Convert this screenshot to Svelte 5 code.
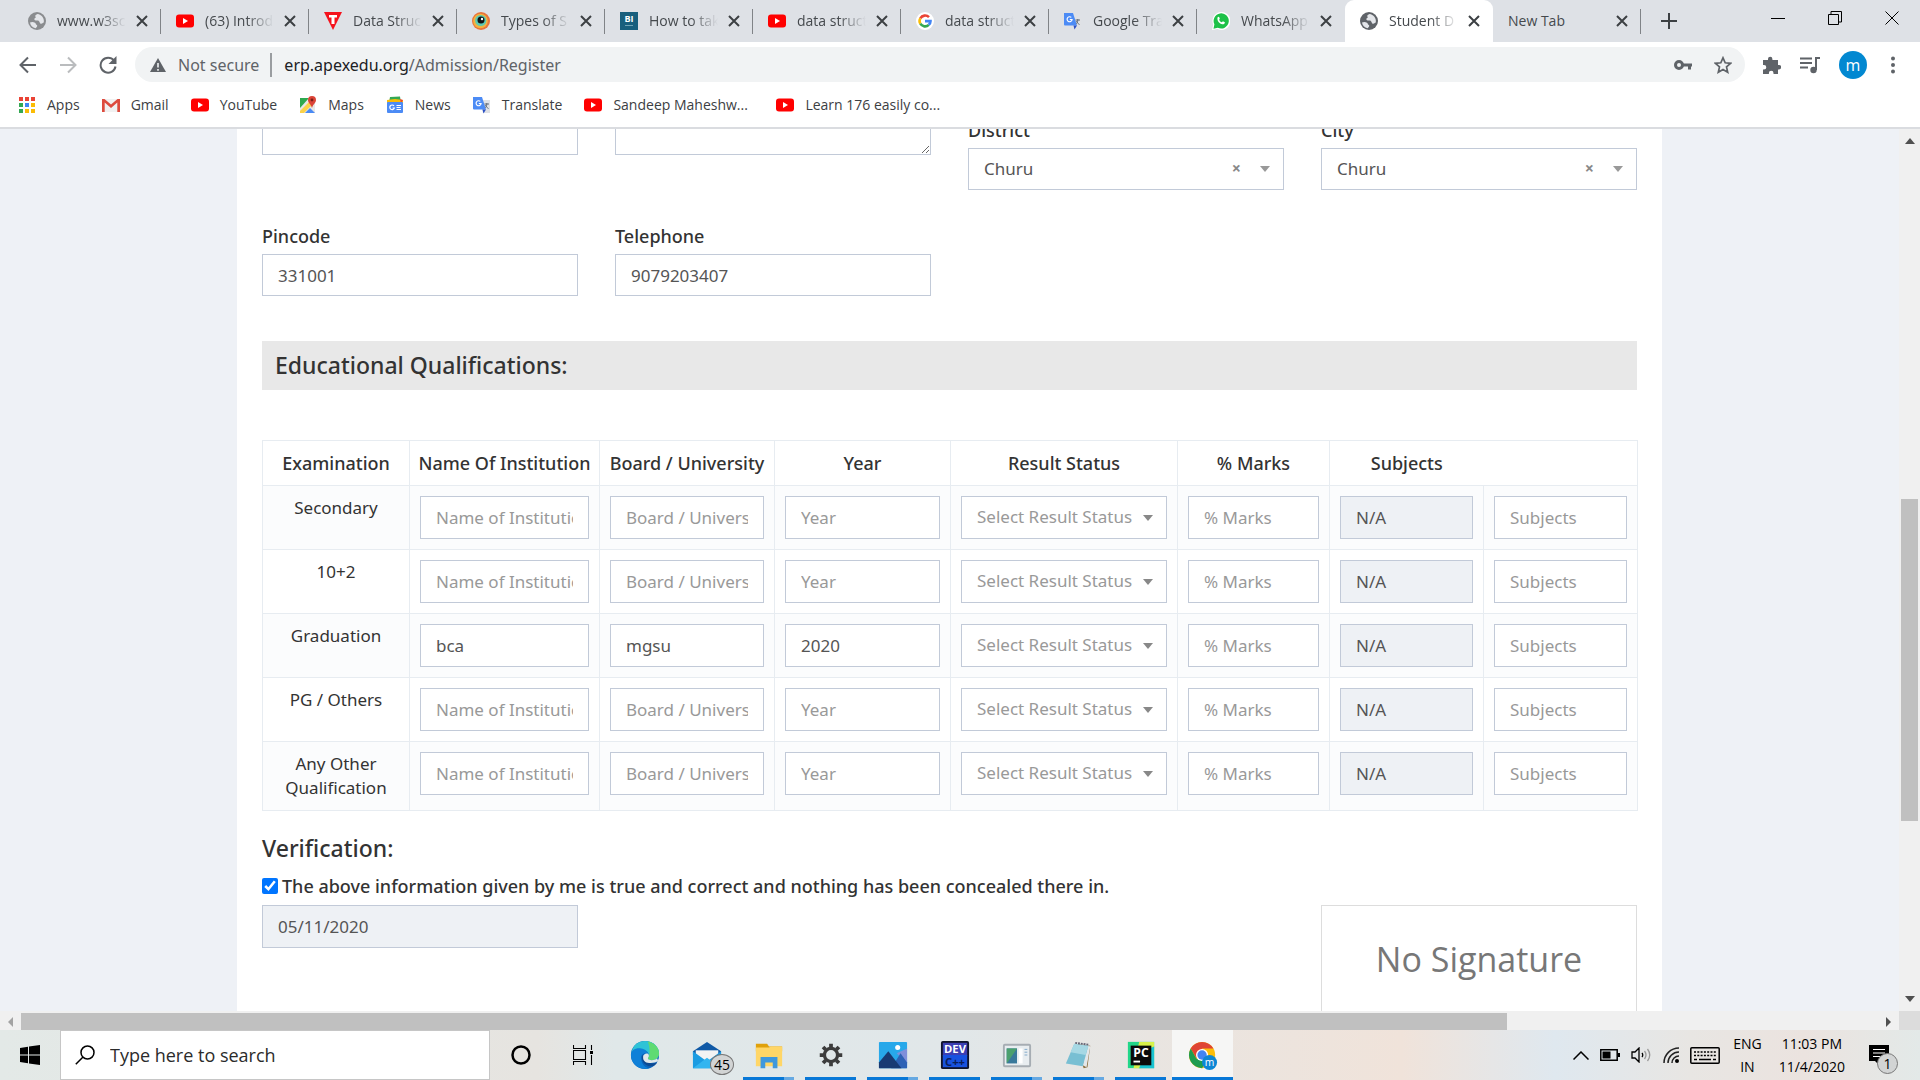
<script>
  const tabs = [
    { icon: 'globe', title: 'www.w3sc' },
    { icon: 'youtube', title: '(63) Introd' },
    { icon: 'tutor', title: 'Data Struc' },
    { icon: 'eye', title: 'Types of S' },
    { icon: 'bi', title: 'How to tak' },
    { icon: 'youtube', title: 'data struct' },
    { icon: 'google', title: 'data struct' },
    { icon: 'translate', title: 'Google Tra' },
    { icon: 'whatsapp', title: 'WhatsApp' },
    { icon: 'globe', title: 'Student D', active: true },
    { icon: '', title: 'New Tab' }
  ];
  const bookmarks = [
    { icon: 'apps', title: 'Apps' },
    { icon: 'gmail', title: 'Gmail' },
    { icon: 'youtube', title: 'YouTube' },
    { icon: 'maps', title: 'Maps' },
    { icon: 'news', title: 'News' },
    { icon: 'translate', title: 'Translate' },
    { icon: 'youtube', title: 'Sandeep Maheshw...', long: true },
    { icon: 'youtube', title: 'Learn 176 easily co...', long: true }
  ];
  const exams = [
    { name: 'Secondary', inst: '', board: '', year: '' },
    { name: '10+2', inst: '', board: '', year: '' },
    { name: 'Graduation', inst: 'bca', board: 'mgsu', year: '2020' },
    { name: 'PG / Others', inst: '', board: '', year: '' },
    { name: 'Any Other Qualification', inst: '', board: '', year: '' }
  ];
  const places = [
    { id: 'district', label: 'District' },
    { id: 'city', label: 'City' }
  ];
  const apps = [
    { icon: 'edge', label: 'Microsoft Edge' },
    { icon: 'mail', label: 'Mail', badge: '45' },
    { icon: 'folder', label: 'File Explorer', open: true, many: true },
    { icon: 'gear', label: 'Settings', open: true },
    { icon: 'photos', label: 'Photos', open: true, many: true },
    { icon: 'dev', label: 'Dev-C++', open: true },
    { icon: 'window', label: 'Program', open: true, many: true },
    { icon: 'notepad', label: 'Notepad', open: true, many: true },
    { icon: 'pycharm', label: 'PyCharm', open: true },
    { icon: 'chrome', label: 'Google Chrome', open: true, active: true }
  ];
</script>

{#snippet siteIcon(name)}
  <svg class="site-icon" viewBox="0 0 18 18" aria-hidden="true">
    {#if name === 'globe'}
      <circle cx="9" cy="9" r="9" fill="currentColor" />
      <path d="M2 10.500c1.500-.8 3.500-.8 5 .2 1 .6.600 1.800 1.800 2.300.8.500.4 1.500-.3 2.200l-.8 1C4.500 15.800 2.300 13.500 2 10.500zM9.500 2c-2.300 1-3 2-1.500 3.300-1.500.8-2.500 2-1 3 1.500.7 3-.3 4 .9 1 1 .5 2.300 2 2.500 1.500.1 1.500-1 2.800-1.200C16.500 6 13.500 2.500 9.500 2z" fill="#e4e6ea" />
    {:else if name === 'youtube'}
      <rect x="0" y="2.500" width="18" height="13" rx="3" fill="#f00" />
      <path d="M7 6v6l5-3z" fill="#fff" />
    {:else if name === 'tutor'}
      <path d="M0 0h18L9 18z" fill="#f5121c" />
      <path d="M5 3h8v2.500h-2.500V12h-3V5.500H5z" fill="#fff" />
    {:else if name === 'eye'}
      <circle cx="9" cy="9" r="9" fill="#e8743b" />
      <circle cx="8.500" cy="9" r="7.300" fill="#f4b23e" />
      <circle cx="8.700" cy="8.500" r="5.600" fill="#5cc9b4" />
      <circle cx="9" cy="8" r="3.500" fill="#111" />
      <circle cx="10" cy="7" r="1.200" fill="#fff" />
    {:else if name === 'bi'}
      <rect width="18" height="18" fill="#185f7d" />
      <text x="9" y="10" text-anchor="middle" font-size="9" font-weight="700" fill="#fff">BI</text>
      <path d="M5 13.500h8" stroke="#6fa3b5" />
    {:else if name === 'google'}
      <circle cx="9" cy="9" r="9" fill="#fff" />
      <g fill="none" stroke-width="2.600">
        <path d="M13 5.200A5.500 5.500 0 0 0 4.300 6.300" stroke="#ea4335" />
        <path d="M4.300 6.300a5.500 5.500 0 0 0 0 5.400" stroke="#fbbc05" />
        <path d="M4.300 11.700a5.500 5.500 0 0 0 8.500 1.200" stroke="#34a853" />
        <path d="M12.800 12.900A5.500 5.500 0 0 0 14.500 9.100H9" stroke="#4285f4" />
      </g>
    {:else if name === 'translate'}
      <path d="M7 4h10v13H10z" fill="#dfe1e5" />
      <path d="M0 1h9l4 12.500H1A1 1 0 0 1 0 12.500z" fill="#4c8bf5" />
      <path d="M9.500 13.500H13l-2.500 4z" fill="#2a4fc4" />
      <path d="M7.300 5.400a2.500 2.500 0 1 0 .8 2.100H5.800" fill="none" stroke="#fff" stroke-width="1.200" />
      <path d="M11.500 8H16M13.800 7v1c0 2-1 3.500-1.500 4M12.500 9c.5 1.500 2 3 3 3.500" fill="none" stroke="#616b78" />
    {:else if name === 'whatsapp'}
      <path d="M1.200 12.500A9 9 0 1 1 5.500 17L0 18z" fill="#fff" />
      <path d="M2.400 12.300a7.600 7.600 0 1 1 3.400 3.400L1.500 16.700z" fill="#1dc148" />
      <path d="M5.500 5.500c.8-1.200 1.500-.9 1.900 0l.4 1.200-.7 1c.8 1.500 1.500 2 2.800 2.600l1-1 2 1c-.1 1.500-1.200 2.200-2.500 2-3-.5-5.500-3.500-4.900-6.800z" fill="#fff" />
    {:else if name === 'apps'}
      {#each [0, 1, 2] as r}
        {#each [0, 1, 2] as c}
          <rect x={1 + c * 6} y={1 + r * 6} width="4" height="4" fill={['#ea4335', '#ea4335', '#ea4335', '#34a853', '#4285f4', '#fbbc05', '#34a853', '#fbbc05', '#fbbc05'][r * 3 + c]} />
        {/each}
      {/each}
    {:else if name === 'gmail'}
      <path d="M0 3h18v13H0z" fill="#f1f1f1" />
      <path d="M0 3h2.500L9 8.500 15.500 3H18v13h-2.700V6.600L9 12 2.700 6.600V16H0z" fill="#dd4b3e" />
    {:else if name === 'maps'}
      <path d="M1 2h15v15H1z" fill="#e8e8e6" />
      <path d="M1 2h9L1 12z" fill="#2da94f" />
      <path d="M1 15 13 3l3 3L5 17H1z" fill="#fbd249" />
      <path d="M6 17l5-5 5 5z" fill="#4a8af4" />
      <path d="M13 0a4 4 0 0 1 4 4c0 3-3 4-4 8-1-4-4-5-4-8a4 4 0 0 1 4-4z" fill="#db4437" />
      <circle cx="13" cy="4" r="1.400" fill="#7b1f18" />
    {:else if name === 'news'}
      <path d="M4 1l10-.5 1 6H3z" fill="#34a853" />
      <path d="M1 4l8-1 8 1v3H1z" fill="#fbbc05" />
      <path d="M14 3l3 1-2 3z" fill="#ea4335" />
      <rect x="1" y="6" width="16" height="11" rx="1" fill="#4c8bf5" />
      <path d="M8 10a2.300 2.300 0 1 0 .3 2H6.500M10.500 9.500h4.500M10.500 11.500h4M10.500 13.500h4.500" fill="none" stroke="#fff" stroke-width="1.200" />
    {/if}
  </svg>
{/snippet}

{#snippet appIcon(name)}
  <svg class="app-icon" viewBox="0 0 32 32" aria-hidden="true">
    {#if name === 'edge'}
      <circle cx="16" cy="16" r="15" fill="#0b63b8" />
      <path d="M1.500 14C3 5 9 1 16 1c9 0 15 6.500 15 13 0 5-4 7.500-8 7.500-3.500 0-4.500-1.500-3.500-3 1.500-2.500 0-7.500-6-7.500-6 0-10.500 1.500-12 3z" fill="#2fc3d6" />
      <path d="M19 1.500C27 3 31 9 31 14c0 5-4 7.500-8 7.500-3.500 0-4.500-1.500-3.500-3 2-3 2-10-.5-17z" fill="#5fdb72" />
      <path d="M1 16c0-5 5-8 11-7 4 .6 7 3 7 6-3-2-7 0-7 5 0 5 4 10 9 10C10 33 1 26 1 16z" fill="#0f80d8" />
      <path d="M13 15c-2 6 2 13 9 13 3 0 5-1 7-4-3 1.500-14 3-16-9z" fill="#0d4a93" />
      <path d="M19.500 15c1 1.500.8 2.700 0 3.500-1 1.500 0 3 3.500 3 3 0 5-1 6-2l1 3c-4 3-17 4-16-5 .3-2 3-4 5.500-2.500z" fill="#e1e8ea" />
    {:else if name === 'mail'}
      <path d="M1 12 16 2l15 10v4H1z" fill="#0f59a6" />
      <path d="M4 11h24v12H4z" fill="#f3f3f3" />
      <path d="M1 12l15 11 15-11v18H1z" fill="#1b9ce2" />
      <path d="M1 30l15-11 15 11z" fill="#32b5f0" />
    {:else if name === 'folder'}
      <path d="M2 4h12l2 3h14v5H2z" fill="#e0a10b" />
      <path d="M2 8h14l2-1h12v21H2z" fill="#ffd667" />
      <path d="M7 18h18v12h-5v-6h-8v6H7z" fill="#3f98dd" />
    {:else if name === 'gear'}
      <g stroke="#3c3c3c" stroke-width="4">
        {#each [0, 45, 90, 135] as a}
          <path d="M16 4v4M16 24v4" transform="rotate({a} 16 16)" />
        {/each}
      </g>
      <circle cx="16" cy="16" r="7" fill="none" stroke="#3c3c3c" stroke-width="3.500" />
    {:else if name === 'photos'}
      <rect x="1" y="2" width="30" height="28" rx="1" fill="#27a8ea" />
      <path d="M20 14l11 12V9z" fill="#7f8fda" />
      <path d="M14 30 24 14l7 10v6z" fill="#2d62b5" />
      <path d="M1 24 11 12l14 18H1z" fill="#183a72" />
      <circle cx="21" cy="8" r="2.700" fill="#fff" />
    {:else if name === 'dev'}
      <rect x="1" y="1" width="30" height="30" rx="2" fill="#10142c" />
      <rect x="3" y="3" width="26" height="14" fill="#3c3fb3" />
      <rect x="3" y="16" width="26" height="13" fill="#1852e0" />
      <text x="16" y="14" text-anchor="middle" font-size="12" font-weight="700" fill="#fff">DEV</text>
      <text x="16" y="28" text-anchor="middle" font-size="12" font-weight="700" fill="#0b1d57">C++</text>
    {:else if name === 'window'}
      <rect x="2" y="5" width="28" height="23" rx="1" fill="#e8edf0" stroke="#a6adb3" stroke-width="2" />
      <rect x="5" y="9" width="11" height="16" fill="#39799b" />
      <path d="M5 9h11L5 25z" fill="#4ba06e" />
      <path d="M18 9h4v16h-4z" fill="#fff" />
      <path d="M24 10h3M24 13h3M24 16h3" stroke="#7fa8c9" />
    {:else if name === 'notepad'}
      <path d="M12 4l16 2-3 23-4 1z" fill="#8a6c3c" />
      <path d="M24 5l4 2-4 22-4-2z" fill="#e3e7e9" />
      <path d="M11 4l15 2-6 22-18-3z" fill="#78bfd3" />
      <path d="M11 4l15 2-3 10-16-3z" fill="#a6d8e4" />
      <path d="M12 3l14 2" stroke="#667" stroke-width="2" stroke-dasharray="2 1" />
    {:else if name === 'pycharm'}
      <rect x="2" y="2" width="28" height="28" fill="#21d789" />
      <path d="M14 2h16v13L16 30H8z" fill="#d8f24a" />
      <path d="M22 10l8-3v23H14z" fill="#19c3d1" />
      <rect x="5" y="6" width="22" height="21" fill="#0b0b0b" />
      <text x="16" y="18" text-anchor="middle" font-size="13" font-weight="700" fill="#fff">PC</text>
      <path d="M8 23h7" stroke="#fff" stroke-width="2" />
    {:else if name === 'chrome'}
      <circle cx="15" cy="16" r="14" fill="#fbbd0a" />
      <path d="M2.900 9a14 14 0 0 1 24.200 0H15L9 19.500z" fill="#df4434" />
      <path d="M2.900 9a14 14 0 0 0 12.100 21l6-10.500-12 .5z" fill="#1e9c50" />
      <circle cx="15" cy="16" r="6.500" fill="#fff" />
      <circle cx="15" cy="16" r="5" fill="#4284f3" />
      <circle cx="23" cy="24" r="8" fill="#0c86d4" />
      <text x="23" y="28" text-anchor="middle" font-size="11" fill="#fff">m</text>
    {/if}
  </svg>
{/snippet}

<div class="screen">
  <header class="browser">
    <div class="strip">
      <nav class="tabs" aria-label="Tabs">
        {#each tabs as tab}
          <div class="tab" class:active={tab.active} class:plain={!tab.icon}>
            {#if tab.icon}{@render siteIcon(tab.icon)}{/if}
            <span class="tab-title">{tab.title}</span>
            <button class="tab-close" aria-label="Close tab">
              <svg width="12" height="12" viewBox="0 0 12 12"><path d="M1 1l10 10M11 1 1 11" stroke="#3c4043" stroke-width="2" /></svg>
            </button>
          </div>
        {/each}
      </nav>
      <button class="new-tab" aria-label="New tab">
        <svg width="16" height="16" viewBox="0 0 16 16"><path d="M8 0v16M0 8h16" stroke="#3c4043" stroke-width="2" /></svg>
      </button>
      <div class="window-buttons">
        <button aria-label="Minimize"><svg width="14" height="14" viewBox="0 0 14 14"><path d="M0 7.500h14" stroke="#000" /></svg></button>
        <button aria-label="Restore"><svg width="14" height="14" viewBox="0 0 14 14"><path d="M.5 3.500h10v10H.5zM3 3V.5h10.500V11H11" fill="none" stroke="#000" /></svg></button>
        <button aria-label="Close"><svg width="14" height="14" viewBox="0 0 14 14"><path d="M.5.5l13 13M13.500.5l-13 13" stroke="#000" /></svg></button>
      </div>
    </div>

    <div class="toolbar">
      <div class="nav-buttons">
        <button aria-label="Back"><svg width="18" height="18" viewBox="0 0 18 18"><path d="M17 9H2M9 1.500 1.500 9 9 16.500" fill="none" stroke="#5f6368" stroke-width="2" /></svg></button>
        <button aria-label="Forward"><svg width="18" height="18" viewBox="0 0 18 18"><path d="M1 9h15M9 1.500 16.500 9 9 16.500" fill="none" stroke="#babcbe" stroke-width="2" /></svg></button>
        <button aria-label="Reload"><svg width="18" height="18" viewBox="0 0 18 18"><path d="M15 4.500A7.500 7.500 0 1 0 16.500 10.500" fill="none" stroke="#5f6368" stroke-width="2" /><path d="M17.500 0v8h-8z" fill="#5f6368" /></svg></button>
      </div>
      <div class="omnibox">
        <svg width="16" height="16" viewBox="0 0 16 16"><path d="M8 1l8 14H0z" fill="#5f6368" /><path d="M8 6v4.500M8 12v1.800" stroke="#f1f3f4" stroke-width="1.600" /></svg>
        <span class="secure">Not secure</span>
        <a class="url" href="#register"><b>erp.apexedu.org</b>/Admission/Register</a>
        <button aria-label="Saved passwords"><svg width="18" height="18" viewBox="0 0 18 18"><circle cx="5" cy="9" r="3.500" fill="none" stroke="#5f6368" stroke-width="3" /><path d="M8 9h10M15.500 9v4.500" stroke="#5f6368" stroke-width="3" /></svg></button>
        <button aria-label="Bookmark this page"><svg width="18" height="18" viewBox="0 0 18 18"><path d="M9 1.800l2.200 5 5.400.5-4.100 3.600 1.200 5.300L9 13.400l-4.700 2.800 1.200-5.300-4.100-3.600 5.400-.5z" fill="none" stroke="#5f6368" stroke-width="1.700" /></svg></button>
      </div>
      <div class="tools">
        <button aria-label="Extensions"><svg width="18" height="18" viewBox="0 0 18 18"><path d="M0 4h5V3a2.200 2.200 0 0 1 4.400 0v1H15v5h1a2.200 2.200 0 0 1 0 4.400h-1V18h-4.500v-1a2.300 2.300 0 0 0-4.600 0v1H0v-4.500h1a2.300 2.300 0 0 0 0-4.600H0z" fill="#5f6368" /></svg></button>
        <button aria-label="Media"><svg width="20" height="18" viewBox="0 0 20 18"><path d="M0 2.500h12M0 7h12M0 11.500h8M16 14V2h4" fill="none" stroke="#5f6368" stroke-width="2" /><circle cx="13.500" cy="14" r="3.200" fill="#5f6368" /></svg></button>
        <button class="avatar" aria-label="Profile">m</button>
        <button aria-label="Menu"><svg width="6" height="18" viewBox="0 0 6 18"><g fill="#5f6368"><circle cx="3" cy="2.500" r="2" /><circle cx="3" cy="9" r="2" /><circle cx="3" cy="15.500" r="2" /></g></svg></button>
      </div>
    </div>

    <nav class="bookmarks" aria-label="Bookmarks">
      {#each bookmarks as mark}
        <a href="#bookmark" class:long={mark.long}>{@render siteIcon(mark.icon)}<span>{mark.title}</span></a>
      {/each}
    </nav>
  </header>

  <div class="viewport">
    <main>
      <form class="sheet">
        <div class="fields">
          <textarea class="control fixed" aria-label="Permanent address"></textarea>
          <textarea class="control" aria-label="Correspondence address"></textarea>
          {#each places as place}
            <div class="field">
              <label for={place.id}>{place.label}</label>
              <div class="picker">
                <select class="control" id={place.id}><option>Churu</option></select>
                <button type="button" class="clear" aria-label="Clear {place.label}">×</button>
                <svg class="caret" width="10" height="6" viewBox="0 0 10 6"><path d="M0 0h10L5 6z" fill="#999" /></svg>
              </div>
            </div>
          {/each}
          <div class="field">
            <label for="pincode">Pincode</label>
            <input class="control" id="pincode" value="331001" />
          </div>
          <div class="field">
            <label for="telephone">Telephone</label>
            <input class="control" id="telephone" value="9079203407" />
          </div>
        </div>

        <h2 class="band">Educational Qualifications:</h2>

        <table>
          <colgroup>
            <col class="w-exam" /><col class="w-inst" /><col class="w-board" /><col class="w-year" />
            <col class="w-status" /><col class="w-marks" /><col class="w-subject" /><col class="w-subject" />
          </colgroup>
          <thead>
            <tr>
              <th>Examination</th>
              <th>Name Of Institution</th>
              <th>Board / University</th>
              <th>Year</th>
              <th>Result Status</th>
              <th>% Marks</th>
              <th class="open-end">Subjects</th>
              <td class="open-start"></td>
            </tr>
          </thead>
          <tbody>
            {#each exams as exam}
              <tr>
                <td class="name">{exam.name}</td>
                <td><input class="control" placeholder="Name of Institution" aria-label="{exam.name} institution" value={exam.inst} /></td>
                <td><input class="control" placeholder="Board / University" aria-label="{exam.name} board" value={exam.board} /></td>
                <td><input class="control" placeholder="Year" aria-label="{exam.name} year" value={exam.year} /></td>
                <td>
                  <div class="picker">
                    <select class="control muted" aria-label="{exam.name} result status"><option>Select Result Status</option></select>
                    <svg class="caret" width="10" height="6" viewBox="0 0 10 6"><path d="M0 0h10L5 6z" fill="#888" /></svg>
                  </div>
                </td>
                <td><input class="control" placeholder="% Marks" aria-label="{exam.name} marks" /></td>
                <td><input class="control" value="N/A" readonly aria-label="{exam.name} grade" /></td>
                <td><input class="control" placeholder="Subjects" aria-label="{exam.name} subjects" /></td>
              </tr>
            {/each}
          </tbody>
        </table>

        <h2 class="verify">Verification:</h2>
        <div class="consent">
          <input type="checkbox" id="consent" checked />
          <label for="consent">The above information given by me is true and correct and nothing has been concealed there in.</label>
        </div>
        <div class="fields signing">
          <input class="control" value="05/11/2020" readonly aria-label="Date" />
          <div class="signature">No Signature</div>
        </div>
      </form>
    </main>
    <div class="vbar">
      <svg width="10" height="6" viewBox="0 0 10 6"><path d="M0 6h10L5 0z" fill="#505050" /></svg>
      <div class="vtrack"><div class="before"></div><div class="thumb"></div><div class="after"></div></div>
      <svg width="10" height="6" viewBox="0 0 10 6"><path d="M0 0h10L5 6z" fill="#505050" /></svg>
    </div>
    <div class="hbar">
      <svg width="21" height="10" viewBox="0 0 21 10"><path d="M13 0v10L8 5z" fill="#a3a3a3" /></svg>
      <div class="htrack"><div class="thumb"></div><div class="rest"></div></div>
      <svg width="21" height="10" viewBox="0 0 21 10"><path d="M8 0v10l5-5z" fill="#505050" /></svg>
    </div>
    <div class="corner"></div>
  </div>

  <footer class="taskbar">
    <button class="start" aria-label="Start">
      <svg width="20" height="20" viewBox="0 0 20 20"><path d="M0 3l8-1.200v7.700H0zM9 1.600 20 0v9.500H9zM0 10.500h8v7.700L0 17zM9 10.500h11V20L9 18.400z" /></svg>
    </button>
    <div class="search">
      <svg width="20" height="20" viewBox="0 0 20 20"><circle cx="12.500" cy="7.500" r="6.500" fill="none" stroke="#000" stroke-width="1.500" /><path d="M8 12 .8 19.200" stroke="#000" stroke-width="1.500" /></svg>
      <input placeholder="Type here to search" aria-label="Type here to search" />
    </div>
    <div class="apps">
      <button aria-label="Cortana"><svg width="20" height="20" viewBox="0 0 20 20"><circle cx="10" cy="10" r="8.500" fill="none" stroke="#000" stroke-width="2.500" /></svg></button>
      <button aria-label="Task view"><svg width="20" height="20" viewBox="0 0 20 20"><path d="M.5 0v3.500h12V0M.5 5.500h12v9H.5zM.5 20v-3.500h12V20M18.500 0v5M18.500 10v10" fill="none" stroke="#000" stroke-width="1.100" /><path d="M17 6h3v3h-3z" /></svg></button>
      {#each apps as app}
        <button aria-label={app.label} class:open={app.open} class:many={app.many} class:active={app.active}>
          {@render appIcon(app.icon)}
          {#if app.badge}<span class="badge count">{app.badge}</span>{/if}
        </button>
      {/each}
    </div>
    <div class="tray">
      <svg width="16" height="9" viewBox="0 0 16 9"><path d="M.5 8.500 8 1l7.500 7.500" fill="none" stroke="#000" stroke-width="1.500" /></svg>
      <svg width="20" height="12" viewBox="0 0 20 12"><path d="M.8.800h16.400v10.400H.8z" fill="none" stroke="#000" stroke-width="1.500" /><path d="M2.500 2.500h8v7h-8zM18 4h2v4h-2z" /></svg>
      <svg width="21" height="16" viewBox="0 0 21 16"><path d="M1 5h3l4-4v14l-4-4H1zM11 6q1.500 2 0 4" fill="none" stroke="#000" stroke-width="1.300" /><path d="M13.500 4q3 4 0 8M16.500 2q4.500 6 0 12" fill="none" stroke="#999" stroke-width="1.300" /></svg>
      <svg width="16" height="16" viewBox="0 0 16 16"><path d="M1 16A15 15 0 0 1 16 1M5 16A11 11 0 0 1 16 5M9 16a7 7 0 0 1 7-7" fill="none" stroke="#222" stroke-width="1.500" /><circle cx="14" cy="14" r="2" /></svg>
      <svg width="30" height="17" viewBox="0 0 30 17"><rect x=".8" y=".8" width="28.400" height="15.400" rx="1" fill="none" stroke="#000" stroke-width="1.500" /><path d="M4 5h22M4 8.500h22" stroke="#000" stroke-width="1.300" stroke-dasharray="2 1.300" /><path d="M4 12.500h3M9 12.500h12M23 12.500h3" stroke="#000" stroke-width="1.300" /></svg>
      <div class="lines lang"><span>ENG</span><span>IN</span></div>
      <div class="lines clock"><span>11:03 PM</span><span>11/4/2020</span></div>
      <button class="notice" aria-label="Notifications">
        <svg width="20" height="20" viewBox="0 0 20 20"><path d="M0 0h20v16H10v4l-4-4H0z" /><path d="M4 4.500h12M4 8h12M4 11.500h8" stroke="#fff" stroke-width="1.200" /></svg>
        <span class="badge">1</span>
      </button>
    </div>
  </footer>
</div>

<style>
  :global(body) { margin: 0; }
  .screen, .screen :global(*) { box-sizing: border-box; }
  .screen {
    display: flex;
    flex-direction: column;
    height: 100vh;
    overflow: hidden;
    font-family: "Open Sans", "Noto Sans", sans-serif;
    font-size: 17px;
    color: #333;
  }
  button {
    display: flex;
    align-items: center;
    justify-content: center;
    padding: 0;
    border: 0;
    background: none;
    font: inherit;
    color: inherit;
  }
  svg { flex: none; display: block; }
  a { color: inherit; text-decoration: none; }
  input, select, textarea { font: inherit; }

  .browser { flex: none; background: #fff; border-bottom: 2px solid #dadce0; font-size: 14px; }
  .site-icon { width: 18px; height: 18px; color: #8a8c8f; }

  .strip { display: flex; height: 42px; background: #dee1e6; }
  .tabs { flex: 1; min-width: 0; display: grid; grid-template-columns: repeat(11, minmax(0, 1fr)); padding-left: 13px; }
  .tab { display: flex; align-items: center; padding: 0 13px 1px 15px; position: relative; color: #45494d; }
  .tab::after { content: ""; position: absolute; right: 0; top: 9px; width: 1px; height: 25px; background: #808387; }
  .tab:has(+ .active)::after, .tab.active::after { display: none; }
  .tab.active { background: #fff; border-radius: 9px 9px 0 0; }
  .tab.active .site-icon { color: #5f6368; }
  .tab-title {
    flex: 1;
    min-width: 0;
    margin: 0 4px 0 11px;
    overflow: hidden;
    white-space: nowrap;
    mask-image: linear-gradient(to right, #000 55%, transparent 92%);
  }
  .plain .tab-title { margin-left: 0; mask-image: none; }
  .new-tab { width: 56px; }
  .window-buttons { display: flex; justify-content: flex-end; width: 223px; }
  .window-buttons button { width: 57px; height: 36px; }

  .toolbar { display: flex; align-items: center; height: 45px; padding: 0 24px 0 19px; }
  .nav-buttons { display: flex; gap: 22px; width: 116px; }
  .omnibox { flex: 1; display: flex; align-items: center; height: 35px; padding: 0 13px 0 15px; border-radius: 18px; background: #f1f3f4; font-family: "Noto Sans", sans-serif; font-size: 16px; color: #5f6368; }
  .secure { margin-left: 12px; padding-right: 11px; border-right: 2px solid #9a9da0; line-height: 24px; }
  .url { flex: 1; margin-left: 12px; }
  .url b { font-weight: 400; color: #202124; }
  .omnibox button { margin-left: 22px; }
  .tools { display: flex; align-items: center; gap: 19px; margin-left: 18px; }
  .avatar { width: 28px; height: 28px; margin-right: 4px; border-radius: 50%; background: #0288d1; color: #fff; font-size: 16px; line-height: 24px; }

  .bookmarks { display: flex; align-items: center; gap: 22px; height: 40px; padding: 0 18px 5px; color: #3c4043; }
  .bookmarks a { display: flex; align-items: center; gap: 11px; white-space: nowrap; }
  .bookmarks a.long { width: 170px; }

  .viewport { flex: 1; min-height: 0; display: grid; grid-template: minmax(0, 1fr) 19px / minmax(0, 1fr) 21px; font-family: "Noto Sans", sans-serif; }
  main { overflow: hidden; background: #eef1f6; }
  .sheet { display: flow-root; margin: 0 237px; padding: 0 25px; background: #fff; min-height: 100%; }
  .fields { display: grid; grid-template-columns: repeat(4, minmax(0, 1fr)); gap: 34px 37px; align-items: start; }
  .fields:first-child { margin-top: -11px; }
  label, th { font-size: 18px; font-weight: 500; color: #333; }
  .field label { display: block; height: 24px; margin-bottom: 6px; line-height: 24px; }
  .control {
    display: block;
    width: 100%;
    height: 42px;
    padding: 0 15px;
    border: 1px solid #c2cad8;
    border-radius: 0;
    background: #fff;
    color: #555;
    appearance: none;
  }
  .control::placeholder { color: #999; opacity: 1; }
  .control:read-only:not(select) { background: #eef1f5; }
  textarea.control { height: 37px; background: #fff; }
  .fixed { resize: none; }
  .picker { position: relative; }
  .picker .control { padding-bottom: 1px; }
  .muted { color: #999; }
  .caret { position: absolute; right: 14px; top: 50%; margin-top: -3px; }
  .clear { position: absolute; right: 43px; top: 10px; height: 20px; color: #888; font-size: 16px; font-weight: 700; }

  h2 { font-size: 23px; font-weight: 500; margin: 0; }
  .band { margin: 45px 0 50px; padding: 0 13px; background: #e8e8e8; line-height: 49px; }

  table { width: 100%; table-layout: fixed; border-collapse: collapse; border: 1px solid #e7ecf1; }
  .w-exam { width: 147px; } .w-inst { width: 190px; } .w-board { width: 175px; } .w-year { width: 176px; }
  .w-status { width: 227px; } .w-marks { width: 152px; } .w-subject { width: 154px; }
  th, td { padding: 10px; border: 1px solid #e7ecf1; line-height: 24px; text-align: center; vertical-align: top; }
  th { padding: 10px 0; white-space: nowrap; }
  .open-end { border-right: 0; }
  .open-start { border-left: 0; }
  tbody tr:nth-child(odd) { background: #fbfcfd; }
  td .control { height: 43px; }

  .verify { margin-top: 20px; line-height: 34px; }
  .consent { display: flex; align-items: center; gap: 4px; height: 40px; padding-top: 1px; }
  .consent input { width: 16px; height: 16px; margin: 0; accent-color: #0075ff; }
  .signing .control { height: 43px; }
  .signature { grid-column: 4; height: 140px; border: 1px solid #ddd; font-family: "Open Sans", sans-serif; font-size: 34px; line-height: 106px; text-align: center; color: #777; }

  .vbar { display: flex; flex-direction: column; align-items: center; gap: 5px; padding: 9px 0; background: #f0f0f0; }
  .vtrack { flex: 1; display: flex; flex-direction: column; width: 17px; }
  .before { flex: 350; }
  .vtrack .thumb { flex: 322; background: #c0c0c0; }
  .after { flex: 170; }
  .hbar { display: flex; align-items: center; padding-top: 2px; background: #f0f0f0; }
  .htrack { flex: 1; align-self: stretch; display: flex; }
  .htrack .thumb { flex: 1486; background: #c0c0c0; }
  .rest { flex: 371; }
  .corner { background: #dcdcdc; }

  .taskbar {
    flex: none;
    display: flex;
    height: 50px;
    color: #000;
    background: linear-gradient(to right, #e3e9e7 0, #e6e4e0 28%, #e0e8e9 32%, #e1e7e9 50%, #e9e5e1 60%, #f0e3da 73%, #dfe8ef 81%, #e8e6e3 88%, #ebe3df 94%, #e3e9e8 100%);
  }
  .start { width: 60px; }
  .search { display: flex; align-items: center; gap: 15px; width: 430px; padding: 0 15px 0 14px; border: 1px solid #c6c6c6; background: #fff; }
  .search input { flex: 1; min-width: 0; padding: 0; border: 0; outline: 0; background: none; font-size: 18px; }
  .search input::placeholder { color: #2b2b2b; opacity: 1; }
  .apps { display: flex; gap: 1px; }
  .apps button { position: relative; width: 61px; }
  .app-icon { width: 30px; height: 30px; }
  .open::after { content: ""; position: absolute; left: 5px; right: 5px; bottom: 0; height: 3px; background: #0878d7; }
  .many::after { background: linear-gradient(to right, #0878d7 80%, #66a9e2 80%); }
  .apps .active { background: #f6f6f5; }
  .active.open::after { left: 0; right: 0; }
  .badge { position: absolute; display: flex; align-items: center; justify-content: center; width: 21px; height: 21px; border: 1px solid #777; border-radius: 50%; background: #d2d4d4; font-size: 14px; line-height: 20px; }
  .count { left: 34px; top: 24px; width: 24px; }
  .tray { display: flex; align-items: center; gap: 11px; margin-left: auto; padding-right: 31px; }
  .lines { display: flex; flex-direction: column; align-items: center; font-size: 14px; line-height: 23px; }
  .lang { margin-left: 2px; }
  .clock { margin-left: 6px; }
  .notice { position: relative; margin-left: 13px; }
  .notice .badge { left: 8px; top: 8px; }
</style>
